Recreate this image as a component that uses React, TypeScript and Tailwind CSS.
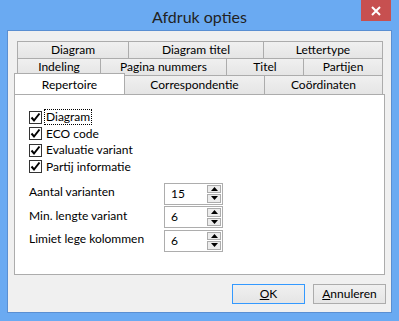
import React from 'react';

const font = { fontFamily: 'Lato, "Noto Sans", sans-serif' };

function Tab({ label, className = '' }: { label: string; className?: string }) {
  return (
    <div
      className={`flex items-center justify-center border border-[#acacac] bg-gradient-to-b from-[#f0f0f0] to-[#e5e5e5] text-[12px] text-black -ml-px first:ml-0 ${className}`}
    >
      {label}
    </div>
  );
}

function Check({ label, focus }: { label: string; focus?: boolean }) {
  return (
    <div className="flex items-center h-[16px] gap-[3px]">
      <div className="w-[13px] h-[13px] border border-[#333] bg-white flex items-center justify-center">
        <svg width="11" height="11" viewBox="0 0 11 11">
          <path d="M1.5 5.5 L4 8.5 L9.5 1.5" fill="none" stroke="#000" strokeWidth="2" />
        </svg>
      </div>
      <span className={`text-[12px] leading-[14px] px-px ${focus ? 'outline outline-1 outline-dotted outline-black' : ''}`}>
        {label}
      </span>
    </div>
  );
}

function Spin({ label, value }: { label: string; value: string }) {
  return (
    <div className="flex items-center h-[22px] mb-[1.5px]">
      <span className="w-[135px] text-[12px] -mt-[3px]">{label}</span>
      <div className="w-[59px] h-[22px] border border-[#adadad] bg-white flex items-center">
        <span className="flex-1 pl-[6px] text-[12px]">{value}</span>
        <div className="flex flex-col w-[15px] h-full py-px pr-px gap-px">
          <div className="flex-1 border border-[#acacac] bg-[#ececec] flex items-center justify-center">
            <svg width="7" height="4" viewBox="0 0 7 4"><path d="M0 4 L3.5 0 L7 4Z" fill="#000" /></svg>
          </div>
          <div className="flex-1 border border-[#acacac] bg-[#ececec] flex items-center justify-center">
            <svg width="7" height="4" viewBox="0 0 7 4"><path d="M0 0 L7 0 L3.5 4Z" fill="#000" /></svg>
          </div>
        </div>
      </div>
    </div>
  );
}

export default function App() {
  return (
    <div className="w-[399px] h-[321px] bg-[#6aaaf2] flex flex-col overflow-hidden text-black" style={font}>
      <div className="h-[30px] flex relative shrink-0">
        <div className="flex-1 text-center text-[16px] pt-[5px] text-[#222]">Afdruk opties</div>
        <div className="absolute right-[8px] top-0 w-[30px] h-[21px] bg-[#c75050] flex items-center justify-center">
          <svg width="10" height="10" viewBox="0 0 10 10">
            <path d="M1 1 L9 9 M9 1 L1 9" stroke="#fff" strokeWidth="2" />
          </svg>
        </div>
      </div>
      <div className="mx-[7px] h-[283px] border border-[#5a8fd2] bg-[#f0f0f0] px-[6px] pt-[10px]">
        <div className="flex flex-col">
          <div className="flex h-[18px] ml-[3px] mr-[2px]">
            <Tab label="Diagram" className="w-[112px]" />
            <Tab label="Diagram titel" className="w-[136px]" />
            <Tab label="Lettertype" className="flex-1" />
          </div>
          <div className="flex h-[18px] -mt-px ml-[3px] mr-[2px]">
            <Tab label="Indeling" className="w-[84px]" />
            <Tab label="Pagina nummers" className="w-[127px]" />
            <Tab label="Titel" className="w-[78px]" />
            <Tab label="Partijen" className="flex-1" />
          </div>
          <div className="flex h-[21px] -mt-[3px] mr-[2px] items-end relative z-10">
            <div className="w-[111px] h-[21px] border border-b-0 border-[#acacac] bg-white text-[12px] text-center pt-[2px]">
              Repertoire
            </div>
            <Tab label="Correspondentie" className="w-[141px] h-[19px] border-b-0" />
            <Tab label="Coördinaten" className="flex-1 h-[19px] border-b-0" />
          </div>
          <div className="h-[181px] border border-[#acacac] bg-white pl-[14px] pt-[14px]">
            <div className="flex flex-col gap-[0.5px]">
              <Check label="Diagram" focus />
              <Check label="ECO code" />
              <Check label="Evaluatie variant" />
              <Check label="Partij informatie" />
            </div>
            <div className="mt-[8px]">
              <Spin label="Aantal varianten" value="15" />
              <Spin label="Min. lengte variant" value="6" />
              <Spin label="Limiet lege kolommen" value="6" />
            </div>
          </div>
        </div>
        <div className="flex justify-end gap-[8px] mt-[9px] -mr-[1px]">
          <button className="w-[73px] h-[20px] border border-[#3399ff] bg-gradient-to-b from-[#f0f0f0] to-[#e5e5e5] text-[12px] leading-none">
            <span className="underline">O</span>K
          </button>
          <button className="w-[73px] h-[20px] border border-[#acacac] bg-gradient-to-b from-[#f0f0f0] to-[#e5e5e5] text-[12px] leading-none">
            <span className="underline">A</span>nnuleren
          </button>
        </div>
      </div>
    </div>
  );
}
